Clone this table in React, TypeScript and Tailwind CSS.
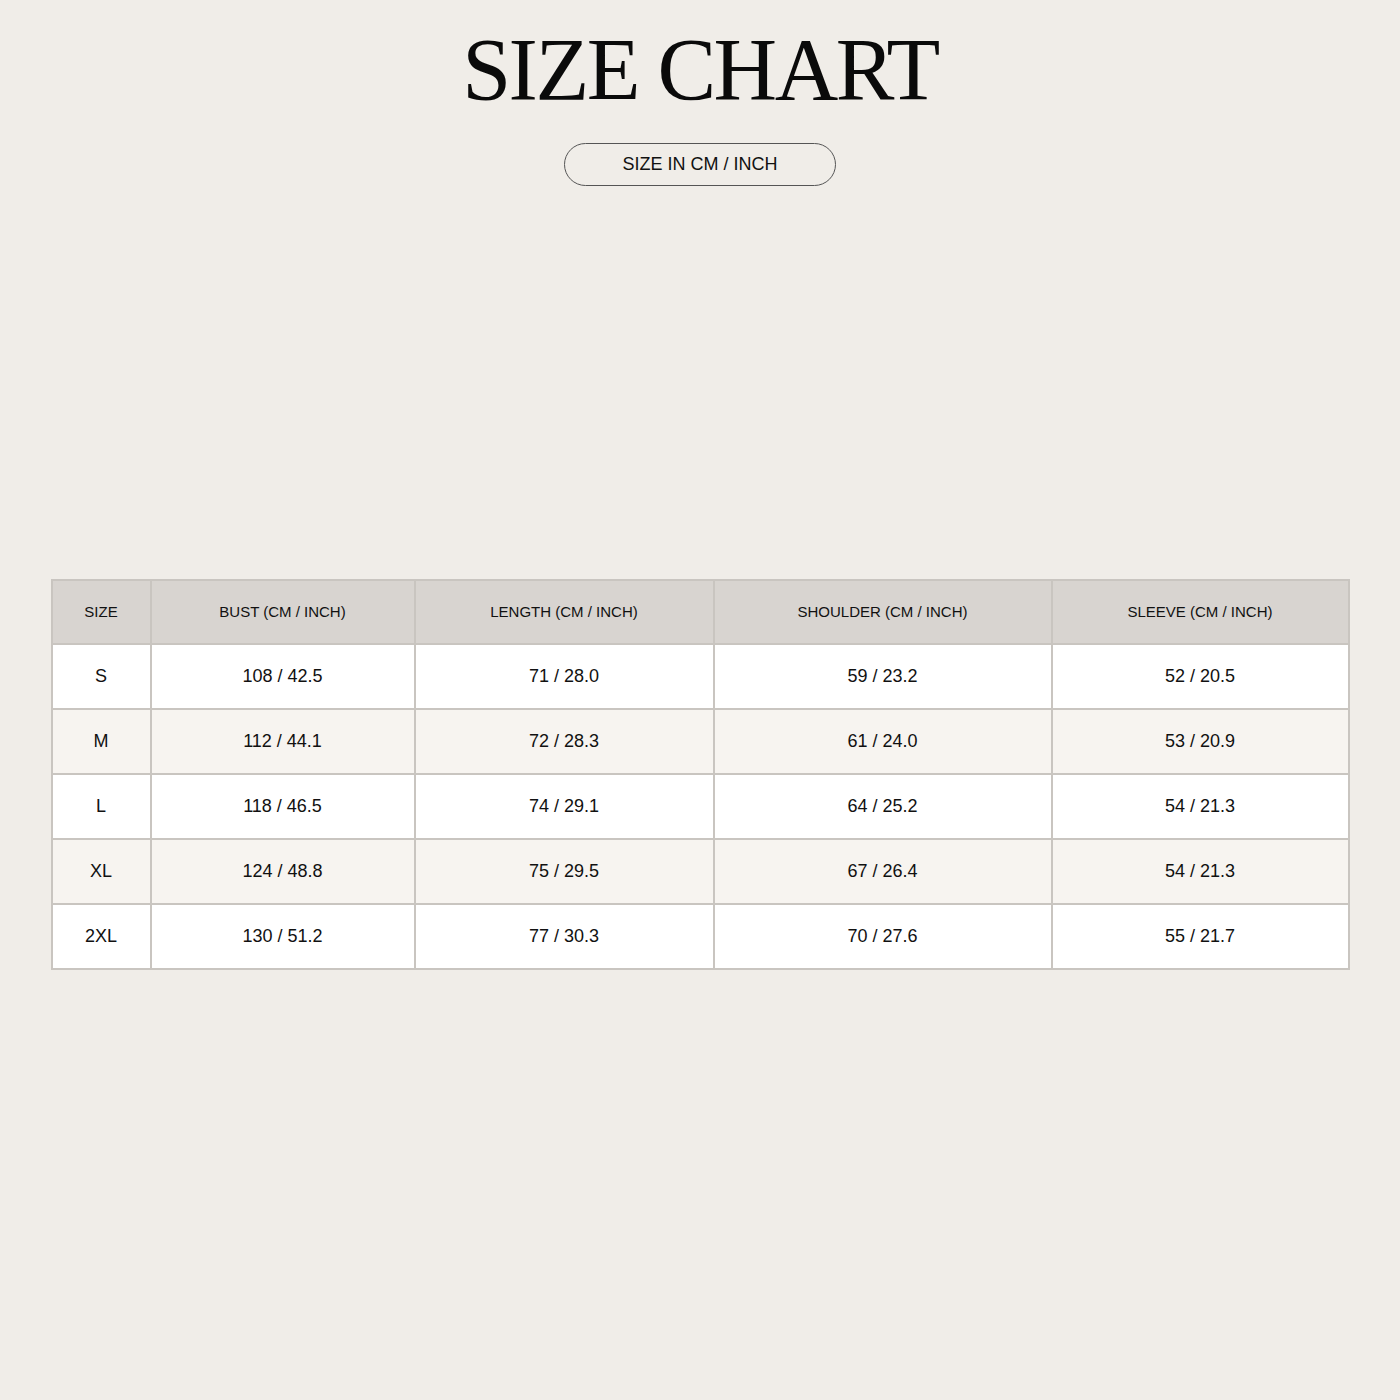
import React from "react";

const headers = [
  "SIZE",
  "BUST (CM / INCH)",
  "LENGTH (CM / INCH)",
  "SHOULDER (CM / INCH)",
  "SLEEVE (CM / INCH)",
];

const rows = [
  ["S", "108 / 42.5", "71 / 28.0", "59 / 23.2", "52 / 20.5"],
  ["M", "112 / 44.1", "72 / 28.3", "61 / 24.0", "53 / 20.9"],
  ["L", "118 / 46.5", "74 / 29.1", "64 / 25.2", "54 / 21.3"],
  ["XL", "124 / 48.8", "75 / 29.5", "67 / 26.4", "54 / 21.3"],
  ["2XL", "130 / 51.2", "77 / 30.3", "70 / 27.6", "55 / 21.7"],
];

const widths = ["w-[99px]", "w-[264px]", "w-[299px]", "w-[338px]", "w-[297px]"];

export default function App() {
  return (
    <div
      className="w-[1400px] h-[1400px] bg-[#f0ede8] flex flex-col items-center text-black"
      style={{ fontFamily: '"Liberation Sans", Arial, sans-serif' }}
    >
      <h1
        className="mt-[25px] text-[88px] leading-[90px] tracking-[-2.5px] text-[#0a0a0a]"
        style={{ fontFamily: '"Liberation Serif", "Times New Roman", serif' }}
      >
        SIZE CHART
      </h1>
      <div className="mt-[28px] w-[272px] h-[43px] rounded-full border border-[#555] flex items-center justify-center text-[18px] text-[#111]">
        SIZE IN CM / INCH
      </div>
      <table className="mt-[393px] border-collapse border-2 border-[#c9c5c0] table-fixed w-[1297px]">
        <colgroup>
          {widths.map((w, i) => (
            <col key={i} className={w} />
          ))}
        </colgroup>
        <thead>
          <tr className="bg-[#d8d4d0] h-[64px]">
            {headers.map((h) => (
              <th
                key={h}
                className="border-2 border-[#c9c5c0] font-normal text-[15px] text-[#111] text-center p-0"
              >
                {h}
              </th>
            ))}
          </tr>
        </thead>
        <tbody>
          {rows.map((r, ri) => (
            <tr
              key={ri}
              className={`h-[65px] ${ri % 2 === 0 ? "bg-white" : "bg-[#f7f4f0]"}`}
            >
              {r.map((c, ci) => (
                <td
                  key={ci}
                  className="border-2 border-[#c9c5c0] text-[18px] text-[#111] text-center p-0"
                >
                  {c}
                </td>
              ))}
            </tr>
          ))}
        </tbody>
      </table>
    </div>
  );
}
